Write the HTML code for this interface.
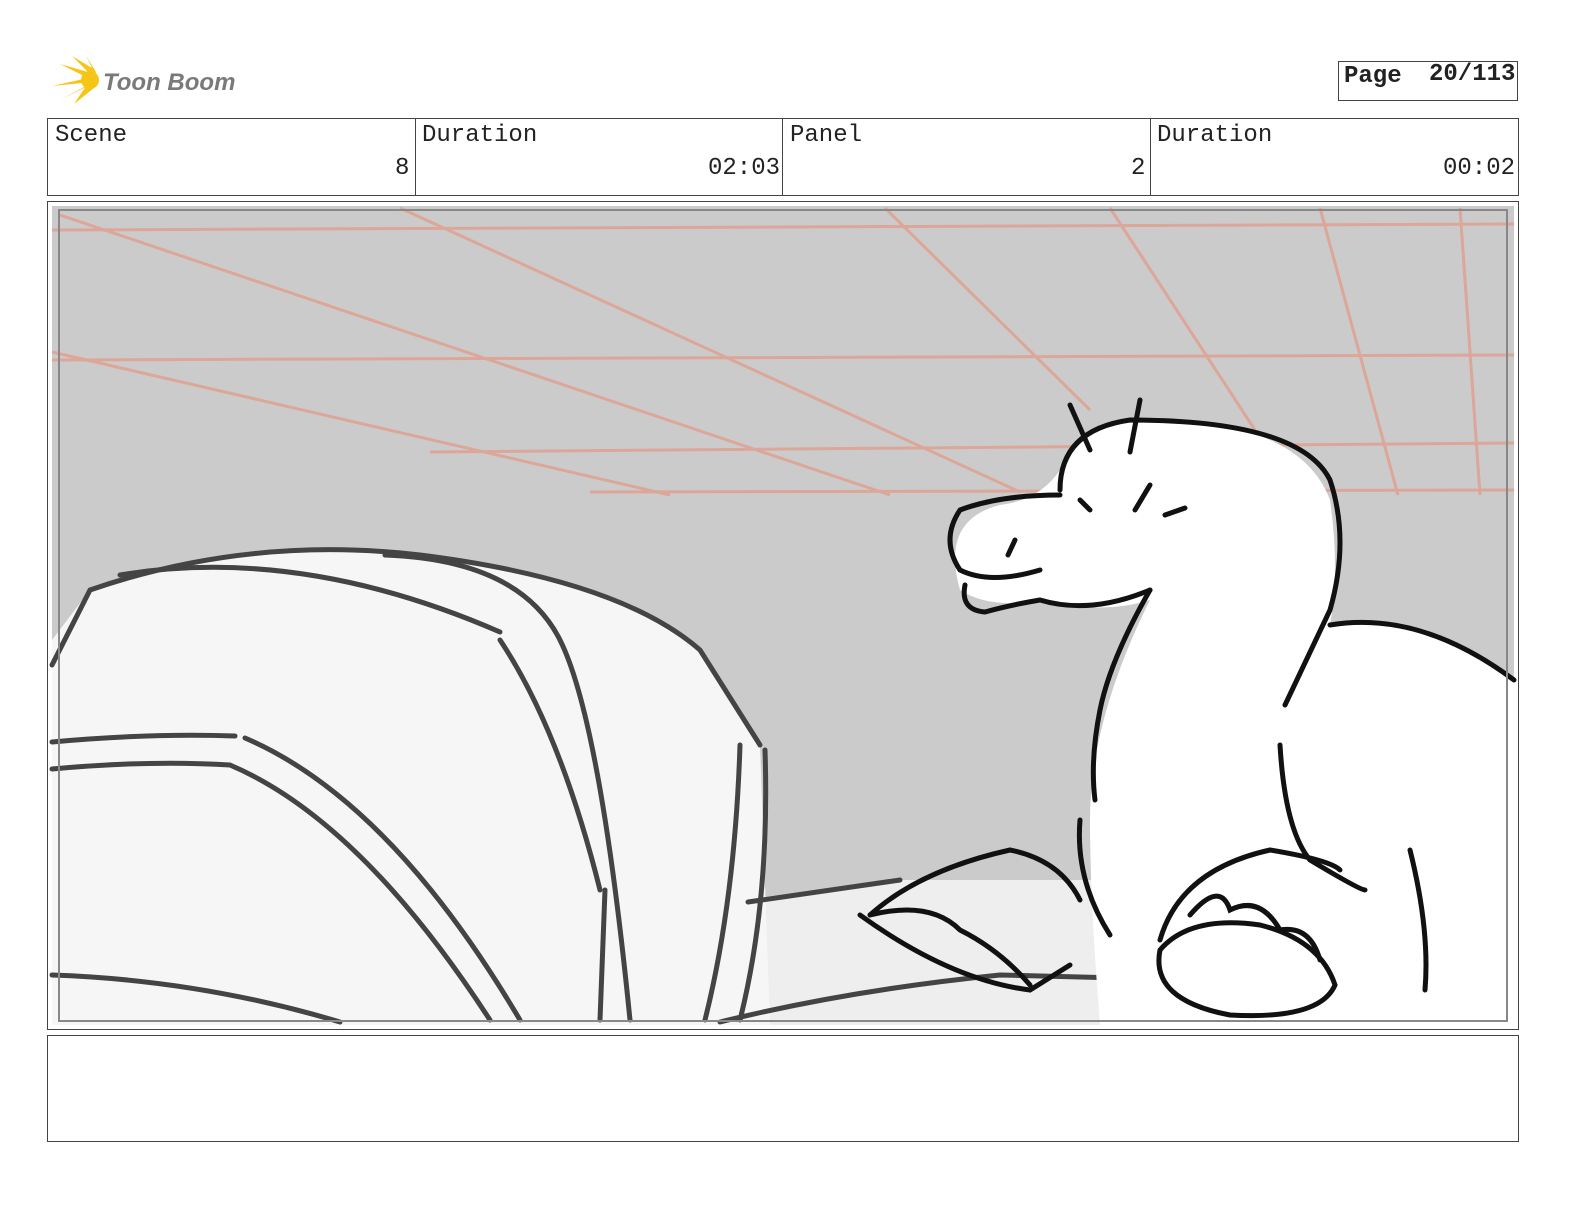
<!DOCTYPE html>
<html><head><meta charset="utf-8"><style>
html{overflow:hidden;margin:0;padding:0;}
body{margin:0;width:1584px;height:1224px;background:#fff;position:relative;overflow:hidden;font-family:"Liberation Mono",monospace;}
.box{position:absolute;border:1px solid #444;box-sizing:border-box;}
.lbl{position:absolute;font-size:24px;color:#222;}
</style></head><body>
<svg width="1584" height="1224" style="position:absolute;left:0;top:0">
<!-- logo -->
<g fill="#f5c518">
<path d="M92 80 L60 64 L88 72 L72 56 L92 68 L86 56 L96 72 Z"/>
<path d="M92 82 L52 86 L88 78 Z"/>
<path d="M92 84 L60 100 L86 86 L74 104 L94 88 Z"/>
<circle cx="90" cy="80" r="9"/>
</g>
<text x="103" y="90" font-family="Liberation Sans" font-style="italic" font-weight="bold" font-size="24" fill="#7a7a7a">Toon Boom</text>
<!-- panel -->
<rect x="52" y="206" width="1462" height="819" fill="#cbcbcb"/>
<g stroke="#e0a090" stroke-width="3" fill="none" opacity="0.85">
<line x1="52" y1="230" x2="1514" y2="224"/>
<line x1="52" y1="360" x2="1514" y2="355"/>
<line x1="430" y1="452" x2="1514" y2="443"/>
<line x1="590" y1="492" x2="1514" y2="490"/>
<line x1="60" y1="215" x2="890" y2="495"/>
<line x1="400" y1="208" x2="1020" y2="492"/>
<line x1="52" y1="352" x2="670" y2="495"/>
<line x1="885" y1="208" x2="1090" y2="410"/>
<line x1="1110" y1="208" x2="1255" y2="430"/>
<line x1="1320" y1="208" x2="1398" y2="495"/>
<line x1="1460" y1="208" x2="1480" y2="495"/>
</g>
<path d="M740 900 L900 880 L1120 880 L1514 960 L1514 1025 L740 1025 Z" fill="#eeeeee"/>
<path d="M52 640 L90 590 Q250 530 420 555 Q620 580 700 650 L760 745 L770 1025 L52 1025 Z" fill="#f6f6f6"/>
<g stroke="#444" stroke-width="5" fill="none" stroke-linecap="round">
<path d="M52 665 L90 590 Q250 535 420 555 Q620 580 700 650 L760 745"/>
<path d="M120 575 Q300 545 500 632"/>
<path d="M385 555 Q520 560 560 640 Q600 720 630 1020"/>
<path d="M500 640 Q560 730 600 890"/>
<path d="M740 745 Q735 900 705 1020"/>
<path d="M765 750 Q770 900 740 1020"/>
<path d="M52 742 Q150 733 235 736"/>
<path d="M245 738 Q390 800 520 1020"/>
<path d="M52 769 Q150 760 230 765 Q360 820 490 1020"/>
<path d="M52 975 Q200 980 340 1022"/>
<path d="M748 902 L900 880"/>
<path d="M720 1022 Q850 990 1000 975 L1400 985 L1460 1022"/>
<path d="M605 890 L600 1020"/>
</g>
<path d="M1060 470 Q1080 420 1150 420 Q1300 420 1330 500 Q1340 570 1330 625 Q1420 610 1514 680 L1514 1025 L1100 1025 Q1090 900 1090 820 Q1090 720 1150 600 Q1100 615 1050 600 Q990 610 960 590 Q940 520 1000 505 Q1040 500 1060 470 Z" fill="#fff"/>
<g stroke="#111" stroke-width="5" fill="none" stroke-linecap="round">
<path d="M1060 490 Q1060 430 1130 420 Q1300 420 1330 480 Q1350 540 1330 610 L1285 705"/>
<path d="M1060 495 Q1000 495 960 510 Q940 540 960 570 Q990 585 1040 570"/>
<path d="M965 585 Q960 610 985 612 Q1010 605 1040 600 Q1090 615 1150 590"/>
<path d="M1070 405 L1090 450 M1140 400 L1130 452"/>
<path d="M1080 500 L1090 510 M1150 485 L1135 510 M1165 515 L1185 508"/>
<path d="M1015 540 L1008 555"/>
<path d="M1150 590 Q1110 660 1100 710 Q1090 760 1095 800"/>
<path d="M1330 625 Q1420 610 1514 680"/>
<path d="M1280 745 Q1285 830 1310 860 Q1360 890 1365 890"/>
<path d="M1410 850 Q1430 930 1425 990"/>
<path d="M1080 820 Q1075 880 1110 935"/>
<path d="M870 915 Q920 870 1010 850 Q1060 860 1080 900"/>
<path d="M860 915 Q950 980 1030 990 L1070 965"/>
<path d="M870 915 Q930 900 960 930 Q1000 950 1030 985"/>
<path d="M1160 940 Q1180 870 1270 850 Q1330 860 1340 870"/>
<path d="M1160 950 Q1150 1000 1230 1015 Q1320 1020 1335 985 Q1320 940 1260 925 Q1190 915 1160 950"/>
<path d="M1190 915 Q1220 880 1230 910 Q1260 895 1280 930 Q1310 925 1320 960"/>
</g>
<rect x="59" y="210" width="1448" height="811" fill="none" stroke="#888" stroke-width="2"/>
</svg>
<div class="box" style="left:1338px;top:61px;width:180px;height:40px;"></div>
<div class="lbl" style="left:1344px;top:63px;font-weight:bold;">Page</div>
<div class="lbl" style="left:1429px;top:61px;font-weight:bold;">20/113</div>
<div class="box" style="left:47px;top:118px;width:1472px;height:78px;"></div>
<div class="box" style="left:415px;top:118px;width:1px;height:78px;border-width:0 0 0 1px"></div>
<div class="box" style="left:782px;top:118px;width:1px;height:78px;border-width:0 0 0 1px"></div>
<div class="box" style="left:1150px;top:118px;width:1px;height:78px;border-width:0 0 0 1px"></div>
<div class="lbl" style="left:55px;top:122px">Scene</div>
<div class="lbl" style="left:422px;top:122px">Duration</div>
<div class="lbl" style="left:790px;top:122px">Panel</div>
<div class="lbl" style="left:1157px;top:122px">Duration</div>
<div class="lbl" style="left:395px;top:155px">8</div>
<div class="lbl" style="left:708px;top:155px">02:03</div>
<div class="lbl" style="left:1131px;top:155px">2</div>
<div class="lbl" style="left:1443px;top:155px">00:02</div>
<div class="box" style="left:47px;top:201px;width:1472px;height:829px;"></div>
<div class="box" style="left:47px;top:1035px;width:1472px;height:107px;"></div>
</body></html>
